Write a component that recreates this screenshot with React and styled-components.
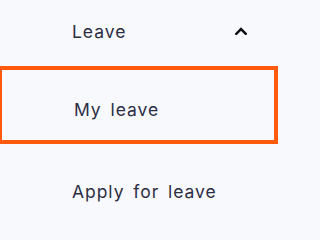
import React from "react";
import styled, { createGlobalStyle } from "styled-components";

const Global = createGlobalStyle`
  html, body { margin: 0; padding: 0; background: #f8f9fd; }
  body { font-family: Inter, "Open Sans", sans-serif; overflow: hidden; }
`;

const Menu = styled.nav`
  width: 278px;
  height: 227px;
  display: flex;
  flex-direction: column;
  background: #f8f9fd;
  color: #2c2e43;
`;

const Header = styled.div`
  height: 66px;
  box-sizing: border-box;
  display: flex;
  align-items: center;
  justify-content: space-between;
  padding: 0 31px 2px 72px;
`;

const Label = styled.span`
  font-size: 17.5px;
  line-height: 1;
  font-weight: 400;
  letter-spacing: 0.95px;
  word-spacing: 3px;
`;

const ChevronBox = styled.span`
  display: flex;
  margin-bottom: 3px;
`;

const Item = styled.div`
  height: ${(p) => (p.$active ? "78px" : "80px")};
  box-sizing: border-box;
  display: flex;
  align-items: center;
  padding-left: ${(p) => (p.$active ? "72px" : "72px")};
  padding-top: ${(p) => (p.$active ? "9px" : "16px")};
  margin-left: ${(p) => (p.$active ? "-2px" : "0")};
  width: ${(p) => (p.$active ? "280px" : "278px")};
  border: ${(p) => (p.$active ? "4px solid #ff5a0d" : "none")};
`;

const Chevron = () => (
  <svg width="12" height="8" viewBox="0 0 12 8" aria-hidden="true">
    <path d="M1.3 6.8 L6 2.1 L10.7 6.8" fill="none" stroke="#111" strokeWidth="2.5" strokeLinecap="square" />
  </svg>
);

export default function App() {
  return (
    <>
      <Global />
      <Menu>
        <Header>
          <Label>Leave</Label>
          <ChevronBox>
            <Chevron />
          </ChevronBox>
        </Header>
        <Item $active>
          <Label>My leave</Label>
        </Item>
        <Item>
          <Label>Apply for leave</Label>
        </Item>
      </Menu>
    </>
  );
}
